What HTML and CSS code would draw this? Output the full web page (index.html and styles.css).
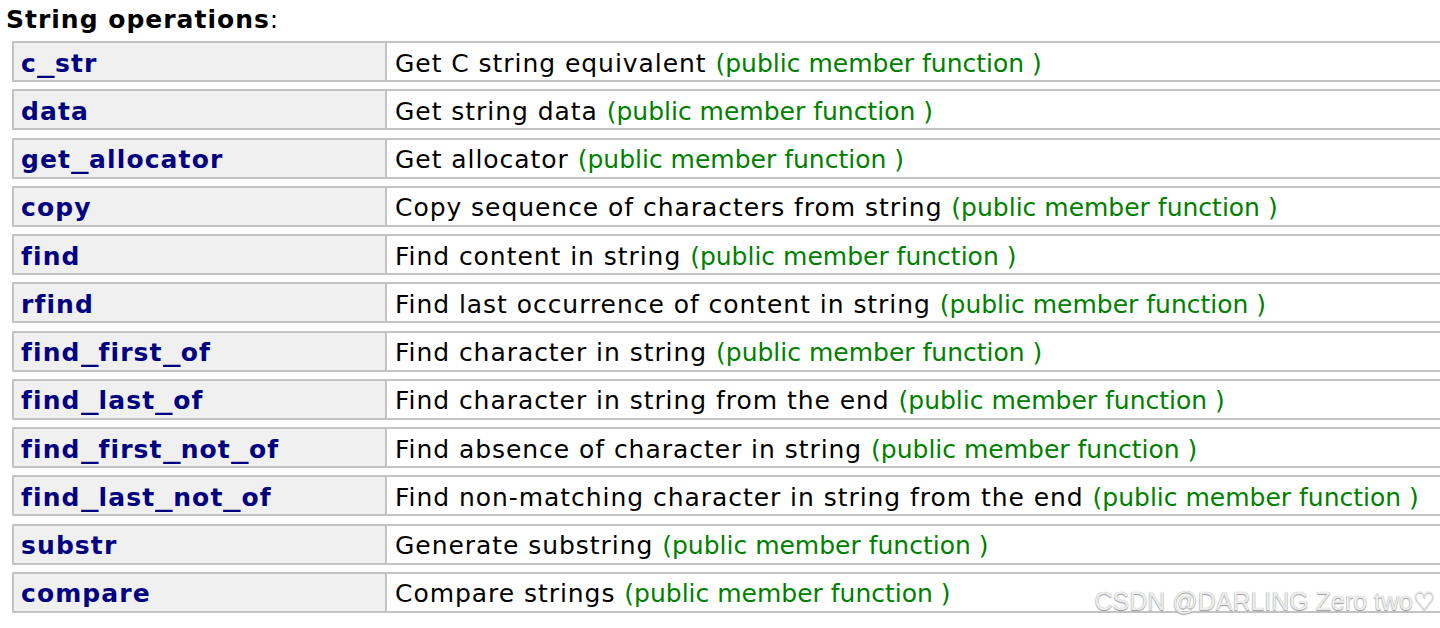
FILE: index.html
```html
<!DOCTYPE html>
<html>
<head>
<meta charset="utf-8">
<link rel="stylesheet" href="styles.css">
</head>
<body>
<div class="page">
  <h3 class="title"><b>String operations</b>:</h3>
  <div class="links">
    <div class="row"><div class="term">c<span class="u">_</span>str</div><div class="desc">Get C string equivalent <span class="typ">(public member function )</span></div></div>
    <div class="row"><div class="term">data</div><div class="desc">Get string data <span class="typ">(public member function )</span></div></div>
    <div class="row"><div class="term">get<span class="u">_</span>allocator</div><div class="desc">Get allocator <span class="typ">(public member function )</span></div></div>
    <div class="row"><div class="term">copy</div><div class="desc">Copy sequence of characters from string <span class="typ">(public member function )</span></div></div>
    <div class="row"><div class="term">find</div><div class="desc">Find content in string <span class="typ">(public member function )</span></div></div>
    <div class="row"><div class="term">rfind</div><div class="desc">Find last occurrence of content in string <span class="typ">(public member function )</span></div></div>
    <div class="row"><div class="term">find<span class="u">_</span>first<span class="u">_</span>of</div><div class="desc">Find character in string <span class="typ">(public member function )</span></div></div>
    <div class="row"><div class="term">find<span class="u">_</span>last<span class="u">_</span>of</div><div class="desc">Find character in string from the end <span class="typ">(public member function )</span></div></div>
    <div class="row"><div class="term">find<span class="u">_</span>first<span class="u">_</span>not<span class="u">_</span>of</div><div class="desc">Find absence of character in string <span class="typ">(public member function )</span></div></div>
    <div class="row"><div class="term">find<span class="u">_</span>last<span class="u">_</span>not<span class="u">_</span>of</div><div class="desc">Find non-matching character in string from the end <span class="typ">(public member function )</span></div></div>
    <div class="row"><div class="term">substr</div><div class="desc">Generate substring <span class="typ">(public member function )</span></div></div>
    <div class="row"><div class="term">compare</div><div class="desc">Compare strings <span class="typ">(public member function )</span></div></div>
  </div>
  <div class="watermark">CSDN @DARLING Zero two♡</div>
</div>
</body>
</html>
```

FILE: styles.css
```css
html, body {
  margin: 0;
  padding: 0;
  overflow: hidden;
  background: #ffffff;
}
.page {
  position: relative;
  width: 1440px;
  height: 628px;
  font-family: "DejaVu Sans", Verdana, sans-serif;
  font-size: 25px;
  color: #000000;
}
.title {
  margin: 0;
  padding: 5px 0 0 6px;
  height: 39px;
  box-sizing: border-box;
  font-size: 25px;
  font-weight: normal;
  line-height: 30px;
}
.title b {
  font-weight: bold;
  letter-spacing: 1px;
}
.links {
  display: flex;
  flex-direction: column;
  gap: 7.27px;
  margin-left: 12px;
  margin-top: 2px;
  width: 1500px;
}
.row {
  display: flex;
  height: 41px;
  box-sizing: border-box;
  border: 2px solid #c3c3c3;
}
.term {
  width: 373px;
  flex: none;
  box-sizing: border-box;
  background: #f0f0f0;
  border-right: 2px solid #c3c3c3;
  padding: 3px 0 0 7px;
  color: #000080;
  font-weight: bold;
  letter-spacing: 1.1px;
  display: flex;
  align-items: center;
  white-space: pre;
}
.u {
  display: inline-block;
  width: 18px;
  letter-spacing: 0;
  transform: scaleX(1.4);
  transform-origin: left center;
}
.desc {
  flex: 1;
  padding: 3px 0 0 8px;
  display: flex;
  align-items: center;
  white-space: pre;
  letter-spacing: 0.95px;
}
.typ {
  color: #008000;
  letter-spacing: 0;
}
.watermark {
  position: absolute;
  right: 5px;
  bottom: 12px;
  font-family: "Liberation Sans", Arial, sans-serif;
  font-size: 25px;
  color: #ececec;
  text-shadow: 0 1px 1px #9a9a9a, 0 0 1px #b0b0b0;
}
```
